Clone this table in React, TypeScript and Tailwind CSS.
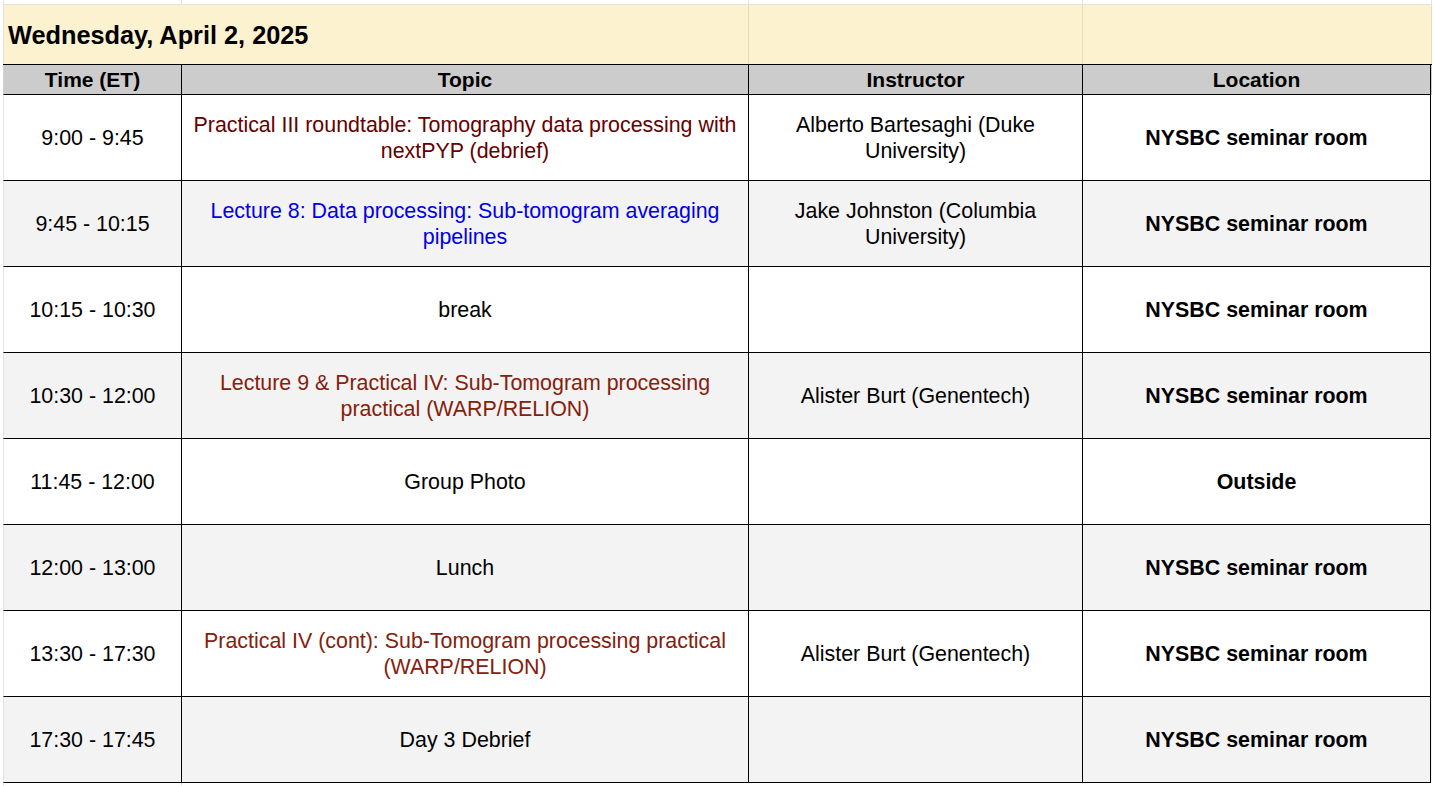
const rows = [
  {
    time: "9:00 - 9:45",
    topic: "Practical III roundtable: Tomography data processing with nextPYP (debrief)",
    color: "text-[#660000]",
    instructor: "Alberto Bartesaghi (Duke University)",
    location: "NYSBC seminar room",
  },
  {
    time: "9:45 - 10:15",
    topic: "Lecture 8: Data processing: Sub-tomogram averaging pipelines",
    color: "text-[#0000e6]",
    instructor: "Jake Johnston (Columbia University)",
    location: "NYSBC seminar room",
  },
  {
    time: "10:15 - 10:30",
    topic: "break",
    color: "text-black",
    instructor: "",
    location: "NYSBC seminar room",
  },
  {
    time: "10:30 - 12:00",
    topic: "Lecture 9 & Practical IV: Sub-Tomogram processing practical (WARP/RELION)",
    color: "text-[#85200c]",
    instructor: "Alister Burt (Genentech)",
    location: "NYSBC seminar room",
  },
  {
    time: "11:45 - 12:00",
    topic: "Group Photo",
    color: "text-black",
    instructor: "",
    location: "Outside",
  },
  {
    time: "12:00 - 13:00",
    topic: "Lunch",
    color: "text-black",
    instructor: "",
    location: "NYSBC seminar room",
  },
  {
    time: "13:30 - 17:30",
    topic: "Practical IV (cont): Sub-Tomogram processing practical (WARP/RELION)",
    color: "text-[#85200c]",
    instructor: "Alister Burt (Genentech)",
    location: "NYSBC seminar room",
  },
  {
    time: "17:30 - 17:45",
    topic: "Day 3 Debrief",
    color: "text-black",
    instructor: "",
    location: "NYSBC seminar room",
  },
]

const cell = "flex items-center justify-center text-center px-[6px] border-b border-r border-black"

export default function App() {
  return (
    <div className="min-h-screen bg-white text-black font-['Liberation_Sans',Arial,sans-serif]">
      <div className="ml-[3px] w-[1429px]">
        {/* spacer above the sheet */}
        <div className="flex h-[4px] border-l border-[#e2e2e2]">
          <div className="w-[178px] border-r border-[#e2e2e2]" />
          <div className="w-[567px] border-r border-[#e2e2e2]" />
          <div className="w-[334px] border-r border-[#e2e2e2]" />
          <div className="w-[349px] border-r border-[#e2e2e2]" />
        </div>

        {/* Title row */}
        <div className="flex h-[60px] bg-[#fdf2d0] border-t border-l border-[#e2e2e2]">
          <div className="w-[745px] flex items-center pl-[4px] border-r border-[#e6dcc0]">
            <span className="text-[25.3px] font-bold leading-none pt-[2px]">Wednesday, April 2, 2025</span>
          </div>
          <div className="w-[334px] border-r border-[#e6dcc0]" />
          <div className="w-[349px] border-r border-[#e6dcc0]" />
        </div>

        {/* Header row */}
        <div className="flex h-[31px] bg-[#cccccc] border-t border-black text-[21px] font-bold leading-none">
          <div className={`${cell} w-[179px] border-l border-l-[#d0d0d0]`}>Time (ET)</div>
          <div className={`${cell} w-[567px]`}>Topic</div>
          <div className={`${cell} w-[334px]`}>Instructor</div>
          <div className={`${cell} w-[348px]`}>Location</div>
        </div>

        {/* Body rows */}
        {rows.map((r, i) => (
          <div
            key={i}
            className={`flex h-[86px] text-[21.4px] leading-[26px] ${i % 2 === 1 ? "bg-[#f3f3f3]" : "bg-white"}`}
          >
            <div className={`${cell} w-[179px] border-l border-l-[#e2e2e2]`}>{r.time}</div>
            <div className={`${cell} w-[567px] ${r.color}`}>{r.topic}</div>
            <div className={`${cell} w-[334px]`}>{r.instructor}</div>
            <div className={`${cell} w-[348px] font-bold`}>{r.location}</div>
          </div>
        ))}

        {/* trailing gridlines */}
        <div className="flex h-[4px] border-l border-[#e2e2e2]">
          <div className="w-[178px] border-r border-[#e2e2e2]" />
        </div>
      </div>
    </div>
  )
}
